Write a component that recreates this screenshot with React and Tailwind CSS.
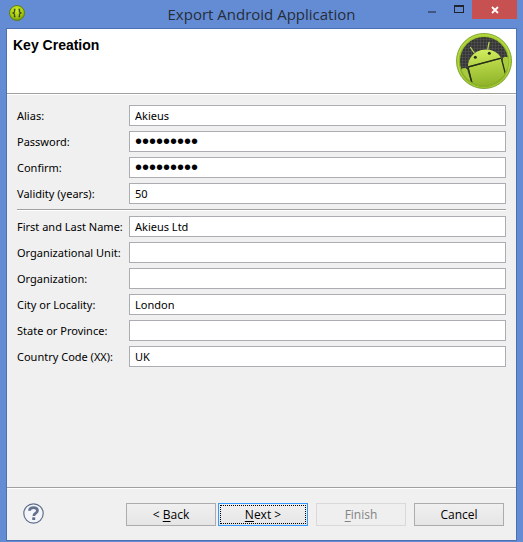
import React from "react";

const identity = [
  { id: "alias", label: "Alias:", value: "Akieus" },
  { id: "password", label: "Password:", value: "akieus123", type: "password" },
  { id: "confirm", label: "Confirm:", value: "akieus123", type: "password" },
  { id: "validity", label: "Validity (years):", value: "50" },
];

const owner = [
  { id: "name", label: "First and Last Name:", value: "Akieus Ltd" },
  { id: "unit", label: "Organizational Unit:", value: "" },
  { id: "organization", label: "Organization:", value: "" },
  { id: "city", label: "City or Locality:", value: "London" },
  { id: "state", label: "State or Province:", value: "" },
  { id: "country", label: "Country Code (XX):", value: "UK" },
];

function AppIcon() {
  return (
    <svg className="size-4" viewBox="0 0 16 16" aria-hidden="true">
      <defs>
        <radialGradient id="app" cx="0.45" cy="0.3" r="0.7">
          <stop offset="0" stopColor="#d0f020" />
          <stop offset="0.7" stopColor="#a4c808" />
          <stop offset="1" stopColor="#6f9010" />
        </radialGradient>
      </defs>
      <circle cx="8" cy="8" r="7.5" fill="url(#app)" stroke="#607c20" />
      <path d="M6.500 4.500H5.500V7L4 8l1.500 1v2.500h1M9.500 4.500h1V7L12 8l-1.500 1v2.500h-1" fill="none" stroke="#3b4a2a" strokeWidth="1.300" />
    </svg>
  );
}

function AndroidLogo() {
  return (
    <svg className="size-14 shrink-0" viewBox="0 0 56 56" aria-label="Android" role="img">
      <defs>
        <linearGradient id="rim" x2="0" y2="1">
          <stop offset="0" stopColor="#a3cb30" />
          <stop offset="1" stopColor="#7ea41c" />
        </linearGradient>
        <linearGradient id="robot" gradientUnits="userSpaceOnUse" x1="26" y1="13" x2="30" y2="54">
          <stop offset="0" stopColor="#d8f468" />
          <stop offset="0.45" stopColor="#b4d444" />
          <stop offset="1" stopColor="#8db128" />
        </linearGradient>
        <pattern id="mesh" width="3" height="3" patternUnits="userSpaceOnUse">
          <rect width="3" height="3" fill="#363636" />
          <path d="M0 0h3M0 0v3" stroke="#585858" />
        </pattern>
        <clipPath id="disc">
          <circle cx="28" cy="28" r="24.500" />
        </clipPath>
      </defs>
      <circle cx="28" cy="28" r="27.500" fill="url(#rim)" stroke="#86a83c" />
      <circle cx="28" cy="28" r="26" fill="none" stroke="#b4da3e" strokeWidth="1.400" />
      <circle cx="28" cy="28" r="24" fill="url(#mesh)" />
      <g clipPath="url(#disc)">
        <path d="M12 33.500A17.500 16 -15 0 1 45 24.800Z" fill="url(#robot)" />
        <path d="m14.500 14.500 3.500 5M33 9.500l-1.200 6.500" stroke="#b9dd50" strokeWidth="1.300" strokeLinecap="round" />
        <circle cx="19.300" cy="24.300" r="1.500" fill="#273019" />
        <circle cx="33.300" cy="20.300" r="1.500" fill="#273019" />
        <path d="m12.500 34.500 33-8.800L53 55H18Z" fill="url(#robot)" />
        <path d="M4.500 38q1-3 4-3t3.500 4l5 17H4ZM46.500 28q-.3-4 3-4.300 3.500 0 4 4.300v18h-3Z" fill="#a7cb3c" />
        <path d="m12 34 33-8.800M12.200 35l5 20M45.500 26l5 19" fill="none" stroke="#263015" strokeWidth="1.300" />
      </g>
      <path d="M4.500 36a24.500 24.500 0 0 0 47 0" fill="none" stroke="#8cb22a" strokeWidth="1.500" />
    </svg>
  );
}

function Field({ id, label, value, type = "text" }) {
  return (
    <div className="flex h-[21px] items-center">
      <label htmlFor={id} className="w-28 shrink-0 whitespace-nowrap">
        {label}
      </label>
      <input
        id={id}
        type={type}
        defaultValue={value}
        className={
          "h-full min-w-0 flex-1 border border-[#abadb3] bg-white px-[5px] outline-none " +
          (type === "password" ? "font-['Liberation_Sans',Arial,sans-serif] text-[20px]" : "")
        }
      />
    </div>
  );
}

const buttonBase = "relative h-[23px] min-w-0 flex-1 max-w-[90px] border bg-linear-to-b ";

export default function App() {
  return (
    <div className="flex min-h-screen flex-col bg-[#638cd4] px-[6px] pb-px font-['Open_Sans','Noto_Sans',sans-serif] text-[12px] leading-4 text-black">
      <header className="grid h-7 grid-cols-[1fr_auto_1fr] items-start">
        <span className="pt-[5px] pl-[3px]">
          <AppIcon />
        </span>
        <h1 className="pt-1 text-[15px] leading-5 whitespace-nowrap text-[#262d3b]">
          Export Android Application
        </h1>
        <div className="flex justify-end">
          <button type="button" aria-label="Minimize" className="flex h-[18px] w-[26px] items-start justify-center pt-[11px]">
            <span className="h-0.5 w-2 bg-[#42577f]" />
          </button>
          <button type="button" aria-label="Maximize" className="flex h-[18px] w-[27px] items-start justify-center pt-[5px]">
            <span className="h-2 w-[10px] border border-t-2 border-[#20242c]" />
          </button>
          <button type="button" aria-label="Close" className="flex h-[19px] w-[45px] items-center justify-center bg-[#c75050]">
            <svg className="size-2" viewBox="0 0 8 8" aria-hidden="true">
              <path d="m1 1 6 6M7 1 1 7" stroke="#fff" strokeWidth="1.800" />
            </svg>
          </button>
        </div>
      </header>

      <main className="flex flex-1 flex-col border border-[#4d70b3] bg-[#f0f0f0]">
        <section className="flex h-[65px] items-start justify-between border-b border-[#a0a0a0] bg-white pt-1 pr-1 pl-[6px]">
          <h2 className="pt-1 font-['Liberation_Sans',Arial,sans-serif] text-[14px] leading-4 font-bold">
            Key Creation
          </h2>
          <AndroidLogo />
        </section>

        <form id="key" className="flex flex-1 flex-col gap-[5px] border-t border-white px-[10px] pt-[10px] pb-4 font-['Noto_Sans','Open_Sans',sans-serif] text-[11px]">
          {identity.map((f) => (
            <Field key={f.id} {...f} />
          ))}
          <hr className="my-0 h-0.5 border-t border-b border-t-[#a0a0a0] border-b-white" />
          {owner.map((f) => (
            <Field key={f.id} {...f} />
          ))}
        </form>

        <footer className="flex h-[53px] items-start border-t border-[#a0a0a0] pt-[15px] pr-3 pl-4 shadow-[inset_0_1px_0_#fff]">
          <button type="button" aria-label="Help" className="size-[21px] shrink-0">
            <svg className="size-[21px]" viewBox="0 0 21 21" aria-hidden="true">
              <circle cx="10.500" cy="10.500" r="9.700" fill="#f4f5f8" stroke="#5e6f8d" strokeWidth="1.200" />
              <path d="M6.500 7.800Q6.600 4.600 10.500 4.600t4 3.200c0 2.500-3.700 2.300-3.700 5.200" fill="none" stroke="#62718e" strokeWidth="2.700" />
              <path d="M9.200 14.300h3v2.700h-3Z" fill="#62718e" />
            </svg>
          </button>
          <div className="flex flex-1 justify-end">
            <button type="button" className={buttonBase + "mr-[2px] border-[#acacac] from-[#f0f0f0] to-[#e5e5e5]"}>
              &lt; <u className="underline-offset-2">B</u>ack
            </button>
            <button type="button" className={buttonBase + "mr-2 border-[#3399ff] from-[#f0f0f0] to-[#e5e5e5] p-px"}>
              <span className="flex h-full items-center justify-center border border-dotted border-black">
                <span>
                  <u className="underline-offset-2">N</u>ext &gt;
                </span>
              </span>
            </button>
            <button type="button" disabled className={buttonBase + "mr-2 border-[#d9d9d9] from-[#efefef] to-[#efefef] text-[#838383]"}>
              <u className="underline-offset-2">F</u>inish
            </button>
            <button type="button" className={buttonBase + "border-[#acacac] from-[#f0f0f0] to-[#e5e5e5]"}>
              Cancel
            </button>
          </div>
        </footer>
      </main>
    </div>
  );
}
